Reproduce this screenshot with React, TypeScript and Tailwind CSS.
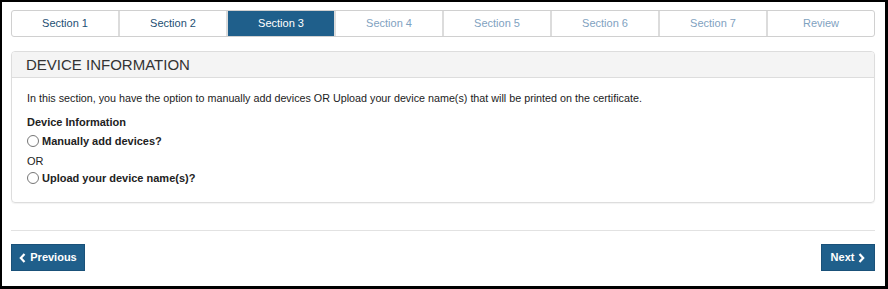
import React from "react";

const tabs = ["Section 1", "Section 2", "Section 3", "Section 4", "Section 5", "Section 6", "Section 7", "Review"];

function Radio() {
  return (
    <span className="inline-block w-[12px] h-[12px] rounded-full border border-[#767676] bg-white mr-[3px] shrink-0" />
  );
}

export default function App() {
  return (
    <div
      className="w-[888px] h-[289px] bg-white border-l-2 border-t-2 border-r-[3px] border-b-[3px] border-black pl-[9px] pr-[10px] pt-[8px] text-[#333]"
      style={{ fontFamily: '"Liberation Sans", Arial, sans-serif' }}
    >
      <div className="flex h-[27px] border border-[#d0d0d0] rounded-[3px] overflow-hidden">
        {tabs.map((t, i) => (
          <div
            key={t}
            className={
              "flex-1 flex items-center justify-center text-[11px] " +
              (i > 0 ? "border-l-2 border-[#dcdcdc] " : "") +
              (i === 2
                ? "bg-[#1f5f8b] text-white border-l-0"
                : i < 2
                ? "text-[#1d4f73]"
                : "text-[#7fa2bf]")
            }
          >
            {t}
          </div>
        ))}
      </div>

      <div className="mt-[14px] h-[152px] border border-[#dddddd] rounded-[4px] shadow-[0_1px_1px_rgba(0,0,0,0.05)] overflow-hidden">
        <div className="h-[26px] bg-[#f4f4f4] border-b border-[#dddddd] flex items-center pl-[14px] text-[15px] text-[#333] leading-none">
          DEVICE INFORMATION
        </div>
        <div className="pl-[15px] pt-[13px] text-[11px] text-[#222] leading-[14px]">
          <div className="text-[10.75px]">In this section, you have the option to manually add devices OR Upload your device name(s) that will be printed on the certificate.</div>
          <div className="mt-[10px] font-bold">Device Information</div>
          <div className="mt-[5px] flex items-center font-bold">
            <Radio />
            Manually add devices?
          </div>
          <div className="mt-[6px]">OR</div>
          <div className="mt-[3px] flex items-center font-bold">
            <Radio />
            Upload your device name(s)?
          </div>
        </div>
      </div>

      <div className="mt-[27px] border-t border-[#e2e2e2]" />

      <div className="mt-[13px] flex justify-between">
        <button className="h-[27px] w-[74px] justify-center bg-[#1f5f8b] border border-[#1a5179] text-white text-[11px] font-bold flex items-center gap-[4px]">
          <svg width="7" height="10" viewBox="0 0 7 10">
            <path d="M5.5 1 L1.8 5 L5.5 9" stroke="white" strokeWidth="2.2" fill="none" />
          </svg>
          Previous
        </button>
        <button className="h-[27px] w-[54px] justify-center bg-[#1f5f8b] border border-[#1a5179] text-white text-[11px] font-bold flex items-center gap-[4px]">
          Next
          <svg width="7" height="10" viewBox="0 0 7 10">
            <path d="M1.5 1 L5.2 5 L1.5 9" stroke="white" strokeWidth="2.2" fill="none" />
          </svg>
        </button>
      </div>
    </div>
  );
}
